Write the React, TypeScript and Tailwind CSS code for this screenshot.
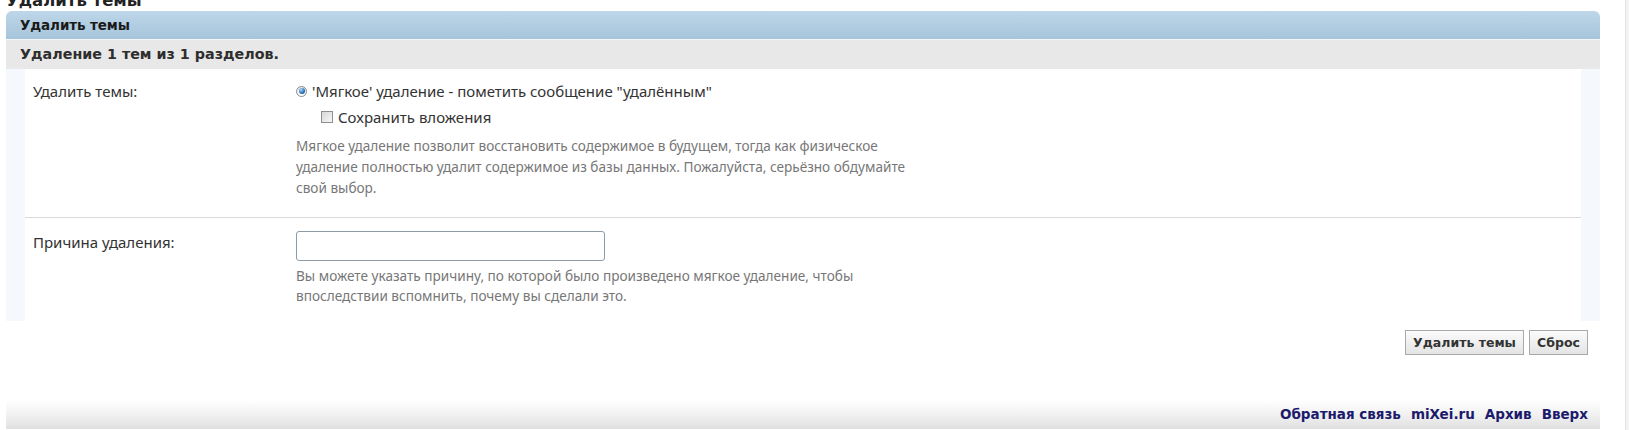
const bold = "font-['DejaVu_Sans',Verdana,sans-serif] font-bold";
const reg = "font-['Noto_Sans','Open_Sans',sans-serif]";

function Radio() {
  return (
    <span className="inline-flex h-[11px] w-[11px] shrink-0 items-center justify-center rounded-full border border-[#8b8b8b] bg-gradient-to-b from-[#e4e4e4] to-white">
      <span className="h-[6px] w-[6px] rounded-full bg-[radial-gradient(circle_at_35%_30%,#a8dcff,#2a6db0_60%,#123f70)]" />
    </span>
  );
}

function Checkbox() {
  return <span className="inline-block h-[12px] w-[12px] shrink-0 border border-[#8e8e8e] bg-gradient-to-br from-[#d8d8d8] to-[#f7f7f7]" />;
}

const btn = `${bold} h-[25px] border border-[#a9a9a9] bg-gradient-to-b from-[#fbfbfb] to-[#e4e4e4] text-[12.5px] text-[#333] leading-[23px]`;

export default function App() {
  return (
    <div className="relative h-[430px] w-[1629px] overflow-hidden bg-white text-[#333]">
      <div className="absolute right-0 top-0 h-full w-[4px] border-l border-[#e3e3e3] bg-[#f3f3f3]" />
      <div className="w-[1600px] pl-[6px]">
        <h1 className={`${bold} -mt-[8px] h-[19px] text-[16.5px] leading-[17px] text-[#222]`}>Удалить темы</h1>

        <div className={`${bold} h-[28px] rounded-t-[6px] bg-gradient-to-b from-[#bed6e8] to-[#a6c5db] pl-[14px] text-[13.5px] leading-[28px] tracking-[-0.1px] text-[#1a1a1a]`}>
          Удалить темы
        </div>
        <div className="h-px bg-[#f4f7fa]" />
        <div className={`${bold} h-[29px] bg-[#e8e8e8] pl-[14px] text-[14.3px] leading-[29px] text-[#2e2e2e]`}>
          Удаление 1 тем из 1 разделов.
        </div>

        <div className="flex">
          <div className="w-[19px] bg-[#f5f9fd]" />
          <div className={`${reg} flex-1 bg-white`}>
            <div className="flex border-b border-[#d9d9d9] pb-[19px] pt-[12px]">
              <div className="w-[271px] pl-[8px] text-[15px] leading-[20px] text-[#333]">Удалить темы:</div>
              <div>
                <label className="flex h-[20px] items-center gap-[5px] text-[15px] leading-[20px] text-[#333]">
                  <Radio />
                  <span>'Мягкое' удаление - пометить сообщение "удалённым"</span>
                </label>
                <label className="ml-[25px] mt-[6px] flex h-[20px] items-center gap-[5px] text-[15px] leading-[20px] text-[#333]">
                  <Checkbox />
                  <span>Сохранить вложения</span>
                </label>
                <p className="mt-[8px] whitespace-nowrap text-[13.6px] leading-[21px] text-[#777]">
                  Мягкое удаление позволит восстановить содержимое в будущем, тогда как физическое
                  <br />
                  удаление полностью удалит содержимое из базы данных. Пожалуйста, серьёзно обдумайте
                  <br />
                  свой выбор.
                </p>
              </div>
            </div>
            <div className="flex pb-[15px] pt-[13px]">
              <div className="w-[271px] pl-[8px] pt-[1px] text-[15px] leading-[20px] text-[#333]">Причина удаления:</div>
              <div>
                <div className="h-[30px] w-[309px] rounded-[3px] border border-[#8d9ba6] bg-white" />
                <p className="mt-[5px] whitespace-nowrap text-[13.6px] leading-[20px] text-[#777]">
                  Вы можете указать причину, по которой было произведено мягкое удаление, чтобы
                  <br />
                  впоследствии вспомнить, почему вы сделали это.
                </p>
              </div>
            </div>
          </div>
          <div className="w-[19px] bg-[#f5f9fd]" />
        </div>

        <div className="flex justify-end gap-[5px] pr-[12px] pt-[9px]">
          <button className={`${btn} w-[119px]`}>Удалить темы</button>
          <button className={`${btn} w-[59px]`}>Сброс</button>
        </div>

        <div className="mt-[45px] flex h-[29px] items-center justify-end gap-[10px] bg-gradient-to-b from-white via-[#f1f1f1] to-[#e0e0e0] pr-[12px]">
          {["Обратная связь", "miXei.ru", "Архив", "Вверх"].map((l) => (
            <a key={l} className={`${bold} text-[13.5px] text-[#1c1a6b]`}>{l}</a>
          ))}
        </div>
      </div>
    </div>
  );
}
